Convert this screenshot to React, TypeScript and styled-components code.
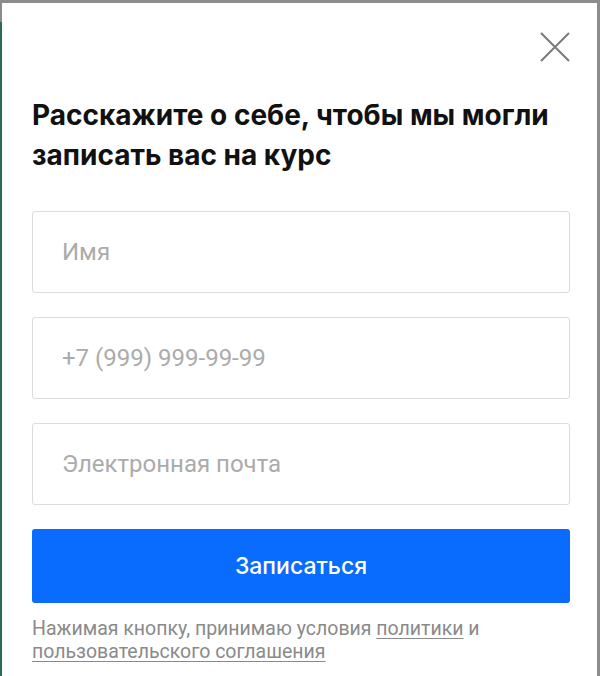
import styled, { createGlobalStyle } from "styled-components";

const GlobalStyle = createGlobalStyle`
  html, body {
    margin: 0;
    padding: 0;
    background: #8c8c8c;
  }
  * {
    box-sizing: border-box;
  }
`;

const CloseIcon = () => (
  <svg width="30" height="30" viewBox="0 0 30 30" fill="none">
    <path d="M1 1L29 29M29 1L1 29" stroke="#7a7a7a" strokeWidth="2" />
  </svg>
);

const App = () => {
  return (
    <>
      <GlobalStyle />
      <Frame>
        <Rail />
        <Modal>
          <CloseRow>
            <CloseButton type="button" aria-label="Закрыть">
              <CloseIcon />
            </CloseButton>
          </CloseRow>
          <Title>Расскажите о себе, чтобы мы могли записать вас на курс</Title>
          <Form onSubmit={(e) => e.preventDefault()}>
            <Field placeholder="Имя" />
            <Field placeholder="+7 (999) 999-99-99" />
            <Field placeholder="Электронная почта" />
            <Submit type="submit">Записаться</Submit>
          </Form>
          <Note>
            Нажимая кнопку, принимаю условия <NoteLink href="#">политики</NoteLink> и{" "}
            <NoteLink href="#">пользовательского соглашения</NoteLink>
          </Note>
        </Modal>
      </Frame>
    </>
  );
};

export default App;

const Frame = styled.div`
  display: flex;
  width: 600px;
  height: 676px;
  padding: 3px 3px 0 0;
  background: #8c8c8c;
  overflow: hidden;
`;

const Rail = styled.div`
  width: 2px;
  flex-shrink: 0;
  background: linear-gradient(to bottom, #8c8c8c 0, #8c8c8c 19px, #2c6a55 19px);
`;

const Modal = styled.div`
  flex: 1;
  display: flex;
  flex-direction: column;
  padding: 29px 27px 0 30px;
  background: #fff;
`;

const CloseRow = styled.div`
  display: flex;
  justify-content: flex-end;
  height: 30px;
`;

const CloseButton = styled.button`
  display: flex;
  padding: 0;
  border: none;
  background: none;
  cursor: pointer;
`;

const Title = styled.h2`
  margin: 33px 0 0;
  font-family: Inter, "Noto Sans", sans-serif;
  font-size: 28px;
  line-height: 40px;
  font-weight: 700;
  color: #111;
  letter-spacing: 0;
`;

const Form = styled.form`
  display: flex;
  flex-direction: column;
  gap: 24px;
  margin-top: 36px;
`;

const Field = styled.input`
  height: 82px;
  padding: 0 29px;
  border: 1px solid #dcdcdc;
  border-radius: 3px;
  font-family: Roboto, "Noto Sans", sans-serif;
  font-size: 24px;
  color: #222;
  outline: none;

  &::placeholder {
    color: #ababab;
  }
`;

const Submit = styled.button`
  height: 74px;
  border: none;
  border-radius: 3px;
  background: #0a6cff;
  color: #fff;
  font-family: Inter, "Noto Sans", sans-serif;
  font-size: 23px;
  font-weight: 500;
  cursor: pointer;
`;

const Note = styled.p`
  margin: 14px 0 0;
  font-family: Roboto, "Noto Sans", sans-serif;
  font-size: 19.5px;
  line-height: 23px;
  color: #8a8a8a;
`;

const NoteLink = styled.a`
  color: #8a8a8a;
  text-decoration: underline;
  text-underline-offset: 3px;
`;
